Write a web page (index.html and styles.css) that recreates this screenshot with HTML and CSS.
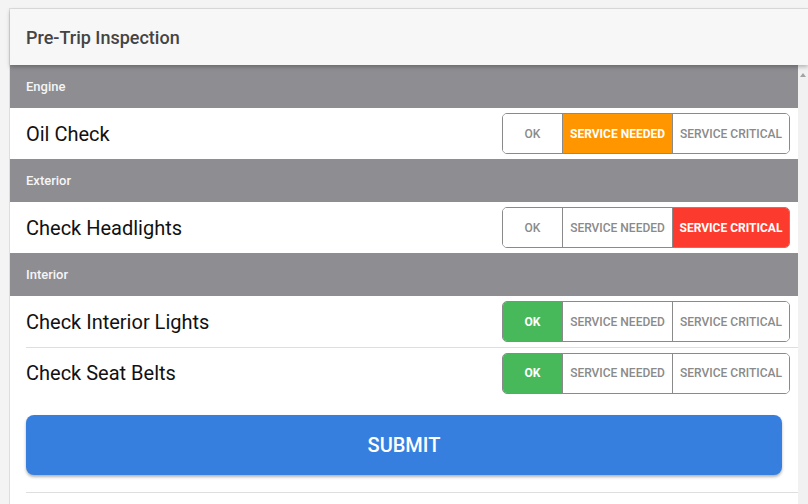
FILE: index.html
```html
<!DOCTYPE html>
<html lang="en">
<head>
    <meta charset="UTF-8">
    <meta name="viewport" content="width=device-width, initial-scale=1.0">
    <title>Pre-Trip Inspection</title>
    <link rel="stylesheet" href="styles.css">
</head>
<body>

<div class="page">
    <div class="card">
        <header class="card-header">
            <h1>Pre-Trip Inspection</h1>
        </header>

        <div class="card-body">
            <div class="content">
                <div class="category">Engine</div>
                <div class="item">
                    <span class="item-label">Oil Check</span>
                    <div class="segment">
                        <button class="seg seg-ok">OK</button>
                        <button class="seg seg-needed active-needed">SERVICE NEEDED</button>
                        <button class="seg seg-critical">SERVICE CRITICAL</button>
                    </div>
                </div>

                <div class="category">Exterior</div>
                <div class="item">
                    <span class="item-label">Check Headlights</span>
                    <div class="segment">
                        <button class="seg seg-ok">OK</button>
                        <button class="seg seg-needed">SERVICE NEEDED</button>
                        <button class="seg seg-critical active-critical">SERVICE CRITICAL</button>
                    </div>
                </div>

                <div class="category">Interior</div>
                <div class="item">
                    <span class="item-label">Check Interior Lights</span>
                    <div class="segment">
                        <button class="seg seg-ok active-ok">OK</button>
                        <button class="seg seg-needed">SERVICE NEEDED</button>
                        <button class="seg seg-critical">SERVICE CRITICAL</button>
                    </div>
                </div>
                <div class="item item-last">
                    <span class="item-label">Check Seat Belts</span>
                    <div class="segment">
                        <button class="seg seg-ok active-ok">OK</button>
                        <button class="seg seg-needed">SERVICE NEEDED</button>
                        <button class="seg seg-critical">SERVICE CRITICAL</button>
                    </div>
                </div>

                <div class="actions">
                    <button class="submit-btn">SUBMIT</button>
                </div>
                <div class="divider"></div>
            </div>

            <div class="scrollbar">
                <span class="scroll-arrow"></span>
            </div>
        </div>
    </div>
</div>

</body>
</html>
```

FILE: styles.css
```css
body,
html {
    height: 100%;
    margin: 0;
    font-family: Roboto, "Liberation Sans", Arial, sans-serif;
}
body {
    background-color: #f4f4f4;
    overflow: hidden;
}
.page {
    height: 100%;
    padding: 8px 0 0 9px;
    box-sizing: border-box;
}
.card {
    height: 100%;
    display: flex;
    flex-direction: column;
    border-top: 1px solid #dedede;
    border-left: 1px solid #dedede;
    background-color: #fff;
}
.card-header {
    height: 56px;
    flex-shrink: 0;
    background-color: #f7f7f7;
    display: flex;
    align-items: center;
    padding-left: 16px;
    position: relative;
    z-index: 2;
    box-shadow: 0 2px 4px rgba(0, 0, 0, 0.25);
}
.card-header h1 {
    margin: 0;
    font-size: 18px;
    font-weight: 500;
    color: #444;
}
.card-body {
    flex: 1;
    display: flex;
    min-height: 0;
}
.content {
    flex: 1;
    background-color: #fff;
}
.scrollbar {
    width: 10px;
    background-color: #f1f1f1;
    position: relative;
}
.scroll-arrow {
    position: absolute;
    top: 8px;
    left: 2px;
    width: 0;
    height: 0;
    border-left: 3px solid transparent;
    border-right: 3px solid transparent;
    border-bottom: 4px solid #a3a3a3;
}
.category {
    height: 43px;
    background-color: #8e8d92;
    color: #f5f5f5;
    font-size: 13px;
    font-weight: 500;
    display: flex;
    align-items: center;
    padding-left: 16px;
}
.item {
    height: 51px;
    display: flex;
    align-items: center;
    justify-content: space-between;
    padding: 0 8px 0 16px;
}
.item + .item {
    border-top: 1px solid #dedede;
    margin-left: 16px;
    padding-left: 0;
    height: 50px;
}
.item-label {
    font-size: 20px;
    color: #111;
}
.segment {
    display: flex;
    height: 41px;
    border: 1px solid #8a8a8a;
    border-radius: 5px;
    overflow: hidden;
    box-sizing: border-box;
}
.seg {
    border: none;
    background-color: #fff;
    font-family: Roboto, "Liberation Sans", Arial, sans-serif;
    font-size: 12px;
    font-weight: 500;
    color: #8a8a8a;
    padding: 0;
    cursor: pointer;
}
.seg + .seg {
    border-left: 1px solid #8a8a8a;
}
.seg-ok {
    width: 59px;
}
.seg-needed {
    width: 110px;
}
.seg-critical {
    width: 117px;
}
.active-ok {
    background-color: #47b95b;
    color: #fff;
    font-weight: 700;
}
.active-needed {
    background-color: #ff9600;
    color: #fff;
    font-weight: 700;
}
.active-critical {
    background-color: #fd3a2e;
    color: #fff;
    font-weight: 700;
}
.actions {
    padding: 17px 16px 17px 16px;
}
.submit-btn {
    width: 100%;
    height: 60px;
    border: none;
    border-radius: 8px;
    background-color: #377fdf;
    color: #fff;
    font-family: Roboto, "Liberation Sans", Arial, sans-serif;
    font-size: 20px;
    font-weight: 500;
    box-shadow: 0 2px 3px rgba(0, 0, 0, 0.3);
    cursor: pointer;
}
.divider {
    margin-left: 16px;
    border-top: 1px solid #dedede;
}
```
